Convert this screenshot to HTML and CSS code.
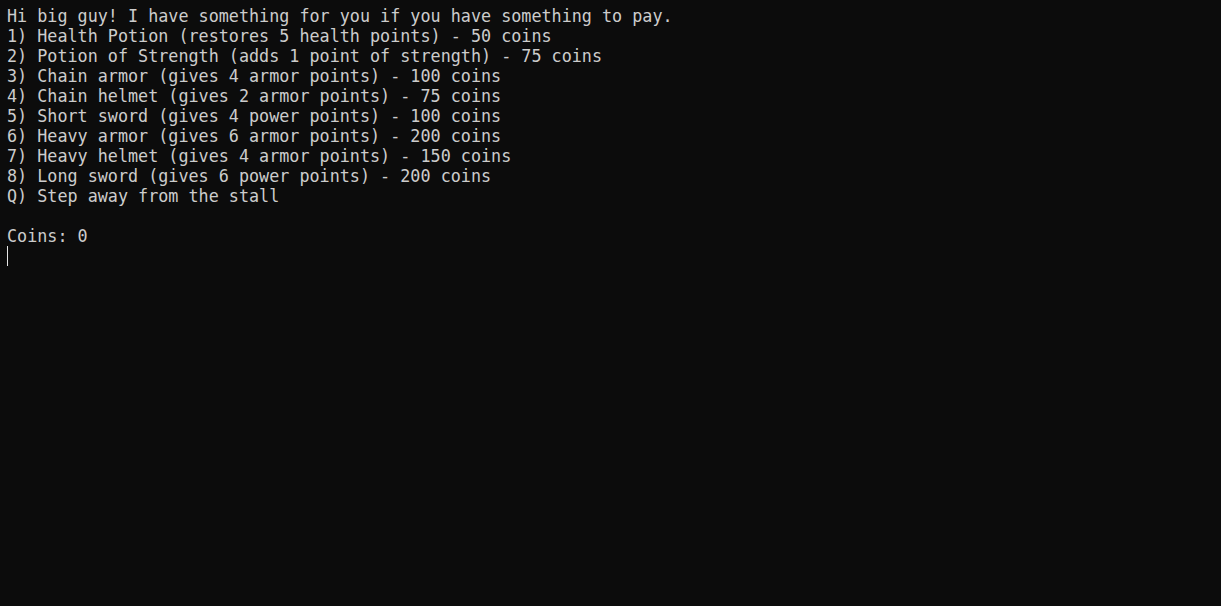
FILE: index.html
```html
<!DOCTYPE html>
<html>
<head>
<meta charset="utf-8">
<link rel="stylesheet" href="styles.css">
</head>
<body>
<div class="term">
<div class="line">Hi big guy! I have something for you if you have something to pay.</div>
<div class="line">1) Health Potion (restores 5 health points) - 50 coins</div>
<div class="line">2) Potion of Strength (adds 1 point of strength) - 75 coins</div>
<div class="line">3) Chain armor (gives 4 armor points) - 100 coins</div>
<div class="line">4) Chain helmet (gives 2 armor points) - 75 coins</div>
<div class="line">5) Short sword (gives 4 power points) - 100 coins</div>
<div class="line">6) Heavy armor (gives 6 armor points) - 200 coins</div>
<div class="line">7) Heavy helmet (gives 4 armor points) - 150 coins</div>
<div class="line">8) Long sword (gives 6 power points) - 200 coins</div>
<div class="line">Q) Step away from the stall</div>
<div class="line"></div>
<div class="line">Coins: 0</div>
<div class="line"><span class="cursor"></span></div>
</div>
</body>
</html>
```
FILE: styles.css
```css
html, body {
  margin: 0;
  padding: 0;
  background: #0c0c0c;
  height: 100%;
}
.term {
  padding: 6px 0 0 7px;
  font-family: "DejaVu Sans Mono", "Liberation Mono", monospace;
  font-size: 16.75px;
  line-height: 20px;
  color: #cccccc;
}
.line {
  height: 20px;
  white-space: pre;
}
.cursor {
  display: inline-block;
  width: 1px;
  height: 20px;
  background: #e6e6e6;
  vertical-align: top;
}
```
